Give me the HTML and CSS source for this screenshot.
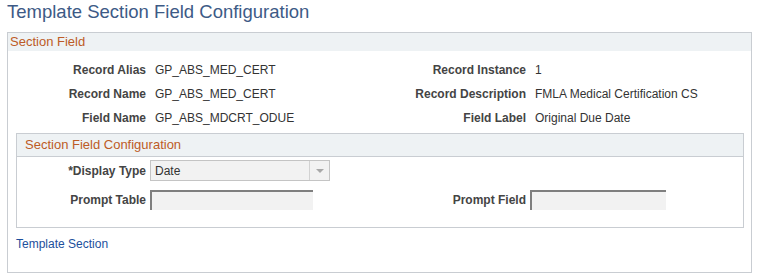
FILE: index.html
```html
<!DOCTYPE html>
<html>
<head>
<meta charset="utf-8">
<link rel="stylesheet" href="styles.css">
</head>
<body>
<h1 class="title">Template Section Field Configuration</h1>
<div class="box">
  <div class="box-head">Section Field</div>
  <div class="info">
    <div class="lbl">Record Alias</div><div class="val">GP_ABS_MED_CERT</div>
    <div class="lbl">Record Instance</div><div class="val">1</div>
    <div class="lbl">Record Name</div><div class="val">GP_ABS_MED_CERT</div>
    <div class="lbl">Record Description</div><div class="val">FMLA Medical Certification CS</div>
    <div class="lbl">Field Name</div><div class="val">GP_ABS_MDCRT_ODUE</div>
    <div class="lbl">Field Label</div><div class="val">Original Due Date</div>
  </div>
  <div class="inner">
    <div class="inner-head">Section Field Configuration</div>
    <div class="form">
      <div class="flbl">*Display Type</div>
      <div class="fctl"><div class="select"><span class="sel-text">Date</span><span class="sel-btn"><span class="arrow"></span></span></div></div>
      <div class="flbl"></div><div class="fctl"></div>
      <div class="flbl">Prompt Table</div>
      <div class="fctl"><div class="input w1"></div></div>
      <div class="flbl">Prompt Field</div>
      <div class="fctl"><div class="input w2"></div></div>
    </div>
  </div>
  <a class="link" href="#">Template Section</a>
</div>
</body>
</html>
```
FILE: styles.css
```css
html, body { margin: 0; padding: 0; background: #ffffff; }
body { font-family: "Liberation Sans", Arial, sans-serif; width: 760px; height: 279px; overflow: hidden; }
.title {
  margin: 0 0 8px 7px;
  font-size: 18.5px;
  line-height: 24px;
  font-weight: normal;
  color: #3d5a86;
}
.box {
  margin-left: 7px;
  width: 743px;
  height: 239px;
  border: 1px solid #c9cdd2;
  box-sizing: content-box;
  display: flex;
  flex-direction: column;
}
.box-head {
  height: 18px;
  line-height: 18px;
  background: #eef2f4;
  color: #bd5b26;
  font-size: 13px;
  padding-left: 2px;
}
.info {
  display: grid;
  grid-template-columns: 138px 234px 146px 1fr;
  grid-auto-rows: 24px;
  align-items: center;
  padding-top: 7px;
  font-size: 12px;
}
.lbl { text-align: right; font-weight: bold; color: #444; }
.val { padding-left: 9px; color: #333; }
.inner {
  margin: 3px 7px 0 8px;
  border: 1px solid #c9cdd2;
  height: 93px;
  display: flex;
  flex-direction: column;
}
.inner-head {
  height: 22px;
  line-height: 22px;
  background: #eef2f4;
  border-bottom: 1px solid #c9cdd2;
  color: #bd5b26;
  font-size: 13px;
  padding-left: 8px;
}
.form {
  display: grid;
  grid-template-columns: 133px 230px 150px 1fr;
  grid-template-rows: 21px 20px;
  row-gap: 9px;
  align-items: center;
  padding-top: 3px;
  font-size: 12px;
}
.flbl { text-align: right; padding-right: 4px; font-weight: bold; color: #444; }
.fctl { display: flex; align-items: center; }
.select {
  width: 180px;
  height: 21px;
  box-sizing: border-box;
  border: 1px solid #c4c4c4;
  background: #f2f2f2;
  display: flex;
  align-items: center;
  justify-content: space-between;
}
.sel-text { padding-left: 4px; color: #333; font-size: 12px; }
.sel-btn {
  width: 19px;
  height: 19px;
  border-left: 1px solid #d2d2d2;
  display: flex;
  align-items: center;
  justify-content: center;
}
.arrow {
  width: 0; height: 0;
  border-left: 4px solid transparent;
  border-right: 4px solid transparent;
  border-top: 4px solid #a8a8a8;
}
.input {
  height: 20px;
  box-sizing: border-box;
  background: #f2f2f2;
  border-top: 2px solid #7f7f7f;
  border-left: 2px solid #7f7f7f;
}
.w1 { width: 163px; }
.w2 { width: 136px; }
.link {
  margin: 9px 0 0 8px;
  font-size: 12px;
  line-height: 14px;
  color: #1d4f9c;
  text-decoration: none;
  align-self: flex-start;
}
```
